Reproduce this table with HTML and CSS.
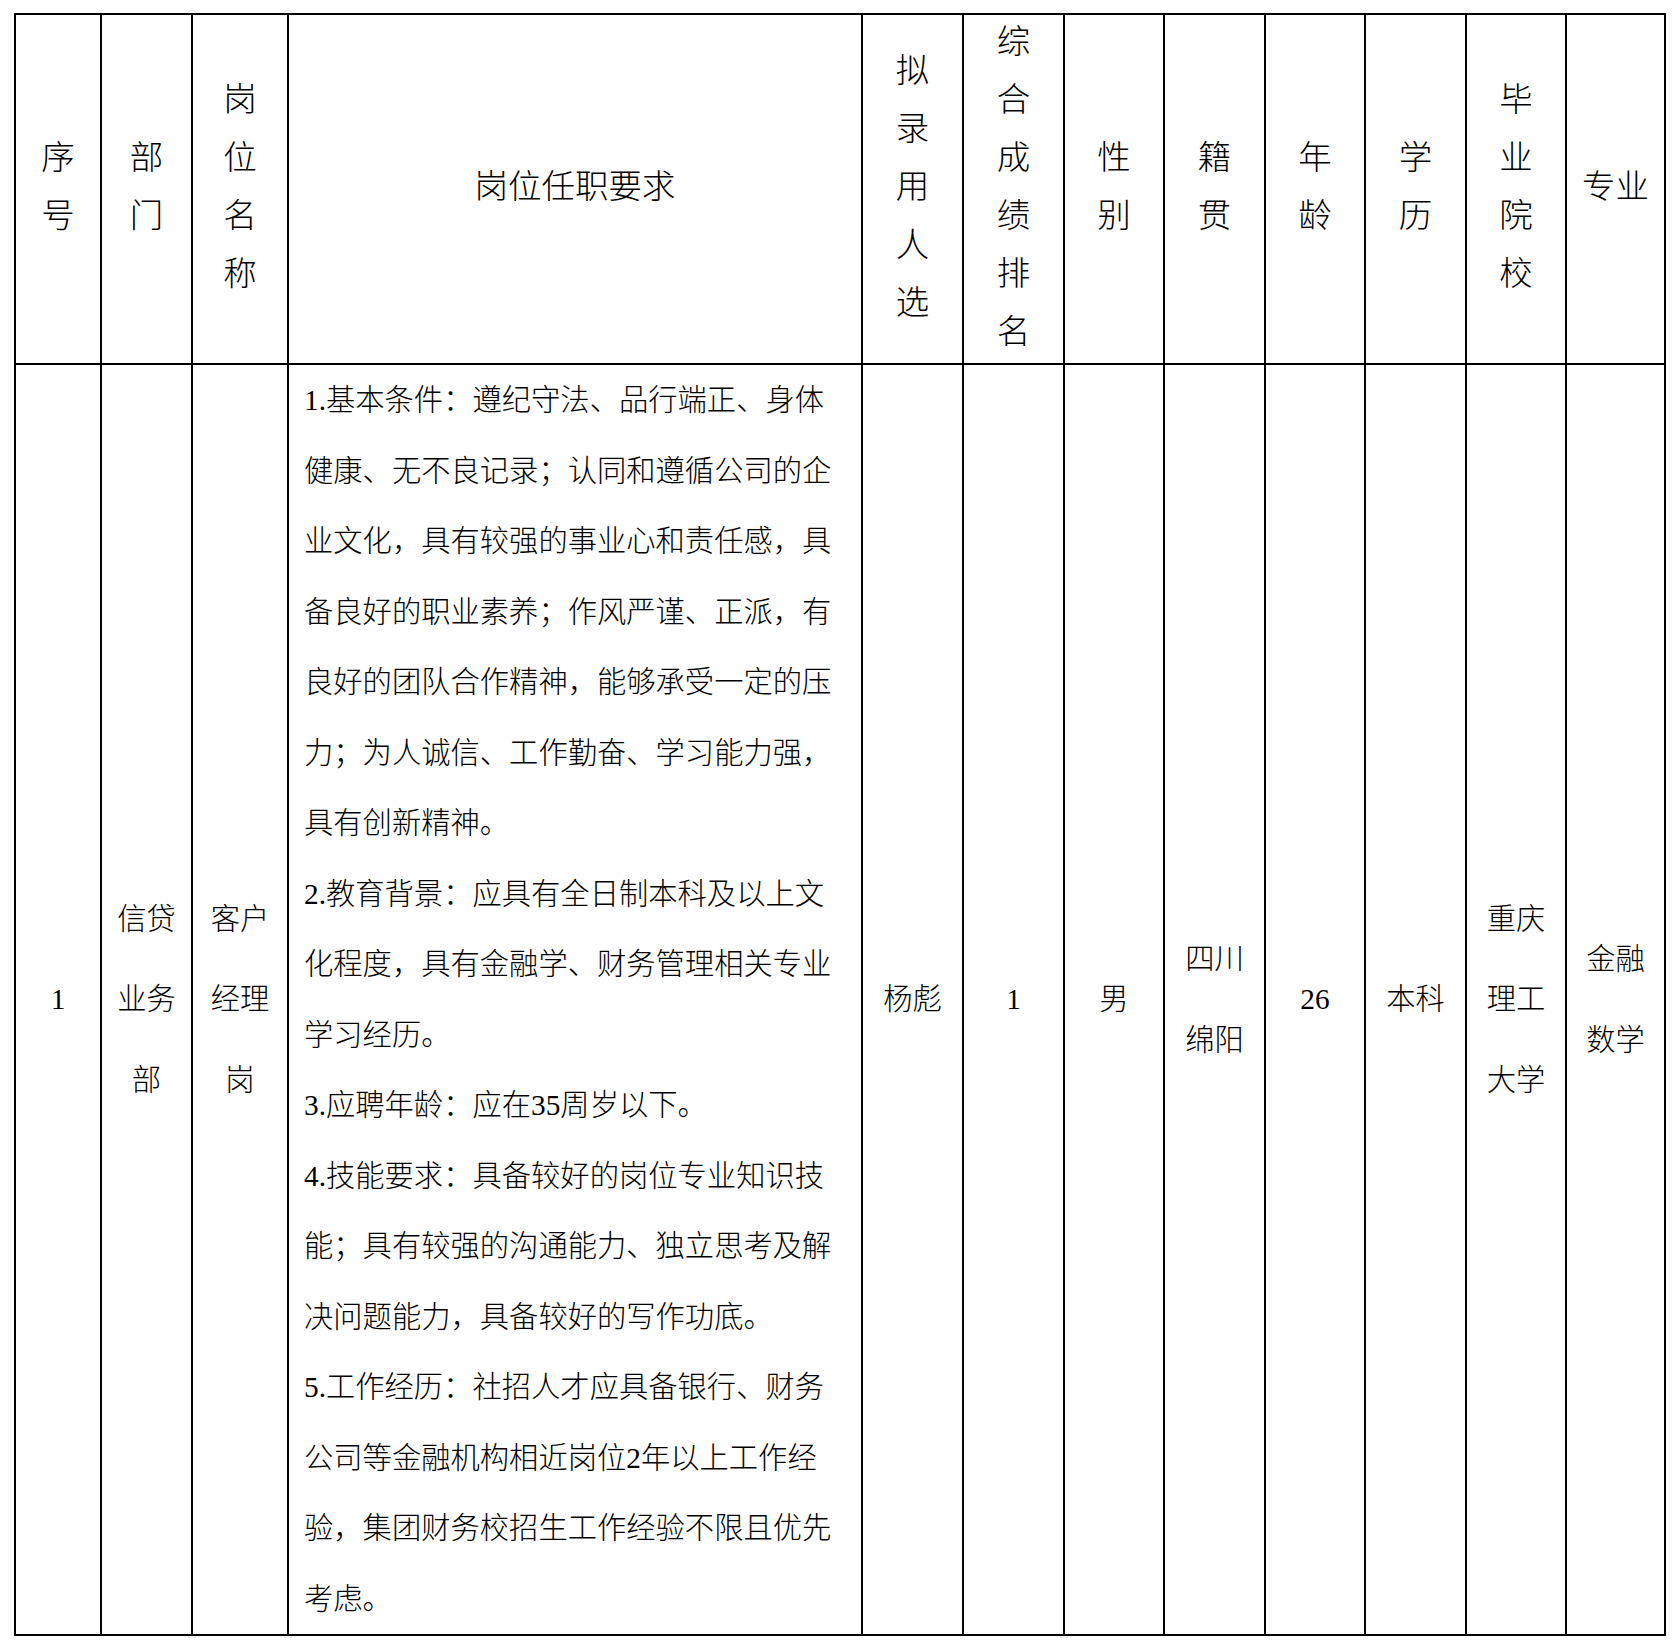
FILE: index.html
```html
<!DOCTYPE html>
<html lang="zh-CN">
<head>
<meta charset="utf-8">
<title>拟录用人选公示</title>
<link rel="stylesheet" href="styles.css">
</head>
<body>
<div class="sheet">
  <div class="cell hd"><p>序<br>号</p></div>
  <div class="cell hd"><p>部<br>门</p></div>
  <div class="cell hd"><p>岗<br>位<br>名<br>称</p></div>
  <div class="cell hd"><p>岗位任职要求</p></div>
  <div class="cell hd"><p>拟<br>录<br>用<br>人<br>选</p></div>
  <div class="cell hd"><p>综<br>合<br>成<br>绩<br>排<br>名</p></div>
  <div class="cell hd"><p>性<br>别</p></div>
  <div class="cell hd"><p>籍<br>贯</p></div>
  <div class="cell hd"><p>年<br>龄</p></div>
  <div class="cell hd"><p>学<br>历</p></div>
  <div class="cell hd"><p>毕<br>业<br>院<br>校</p></div>
  <div class="cell hd"><p>专业</p></div>

  <div class="cell bd"><p>1</p></div>
  <div class="cell bd"><p>信贷<br>业务<br>部</p></div>
  <div class="cell bd"><p>客户<br>经理<br>岗</p></div>
  <div class="cell req">
    <p>1.基本条件：遵纪守法、品行端正、身体健康、无不良记录；认同和遵循公司的企业文化，具有较强的事业心和责任感，具备良好的职业素养；作风严谨、正派，有良好的团队合作精神，能够承受一定的压力；为人诚信、工作勤奋、学习能力强，具有创新精神。</p>
    <p>2.教育背景：应具有全日制本科及以上文化程度，具有金融学、财务管理相关专业学习经历。</p>
    <p>3.应聘年龄：应在35周岁以下。</p>
    <p>4.技能要求：具备较好的岗位专业知识技能；具有较强的沟通能力、独立思考及解决问题能力，具备较好的写作功底。</p>
    <p>5.工作经历：社招人才应具备银行、财务公司等金融机构相近岗位2年以上工作经验，集团财务校招生工作经验不限且优先考虑。</p>
  </div>
  <div class="cell bd"><p>杨彪</p></div>
  <div class="cell bd"><p>1</p></div>
  <div class="cell bd"><p>男</p></div>
  <div class="cell bd"><p>四川<br>绵阳</p></div>
  <div class="cell bd"><p>26</p></div>
  <div class="cell bd"><p>本科</p></div>
  <div class="cell bd"><p>重庆<br>理工<br>大学</p></div>
  <div class="cell bd"><p>金融<br>数学</p></div>
</div>
</body>
</html>
```

FILE: styles.css
```css
html, body {
  margin: 0;
  padding: 0;
  background: #fff;
}

body {
  font-family: "Liberation Serif", "Noto Sans CJK SC", serif;
  font-weight: 300;
  color: #000;
}

.sheet {
  display: grid;
  grid-template-columns: 84px 89px 94px 572px 99px 99px 98px 99px 98px 99px 98px 97px;
  grid-template-rows: 348px 1269px;
  gap: 2px;
  padding: 2px;
  background: #000;
  width: max-content;
  margin: 13px 0 0 14px;
}

.cell {
  background: #fff;
  display: flex;
  flex-direction: column;
  align-items: center;
  justify-content: center;
  text-align: center;
  overflow: visible;
}

.cell p {
  margin: 0;
}

.hd {
  font-size: 33.5px;
  line-height: 58px;
  padding-bottom: 4px;
}

.bd {
  font-size: 29.3px;
  line-height: 80.5px;
  padding-bottom: 0;
}

.req {
  font-size: 29.3px;
  line-height: 70.5px;
  align-items: stretch;
  justify-content: flex-start;
  text-align: left;
  padding: 0 22px 0 15px;
}
```
